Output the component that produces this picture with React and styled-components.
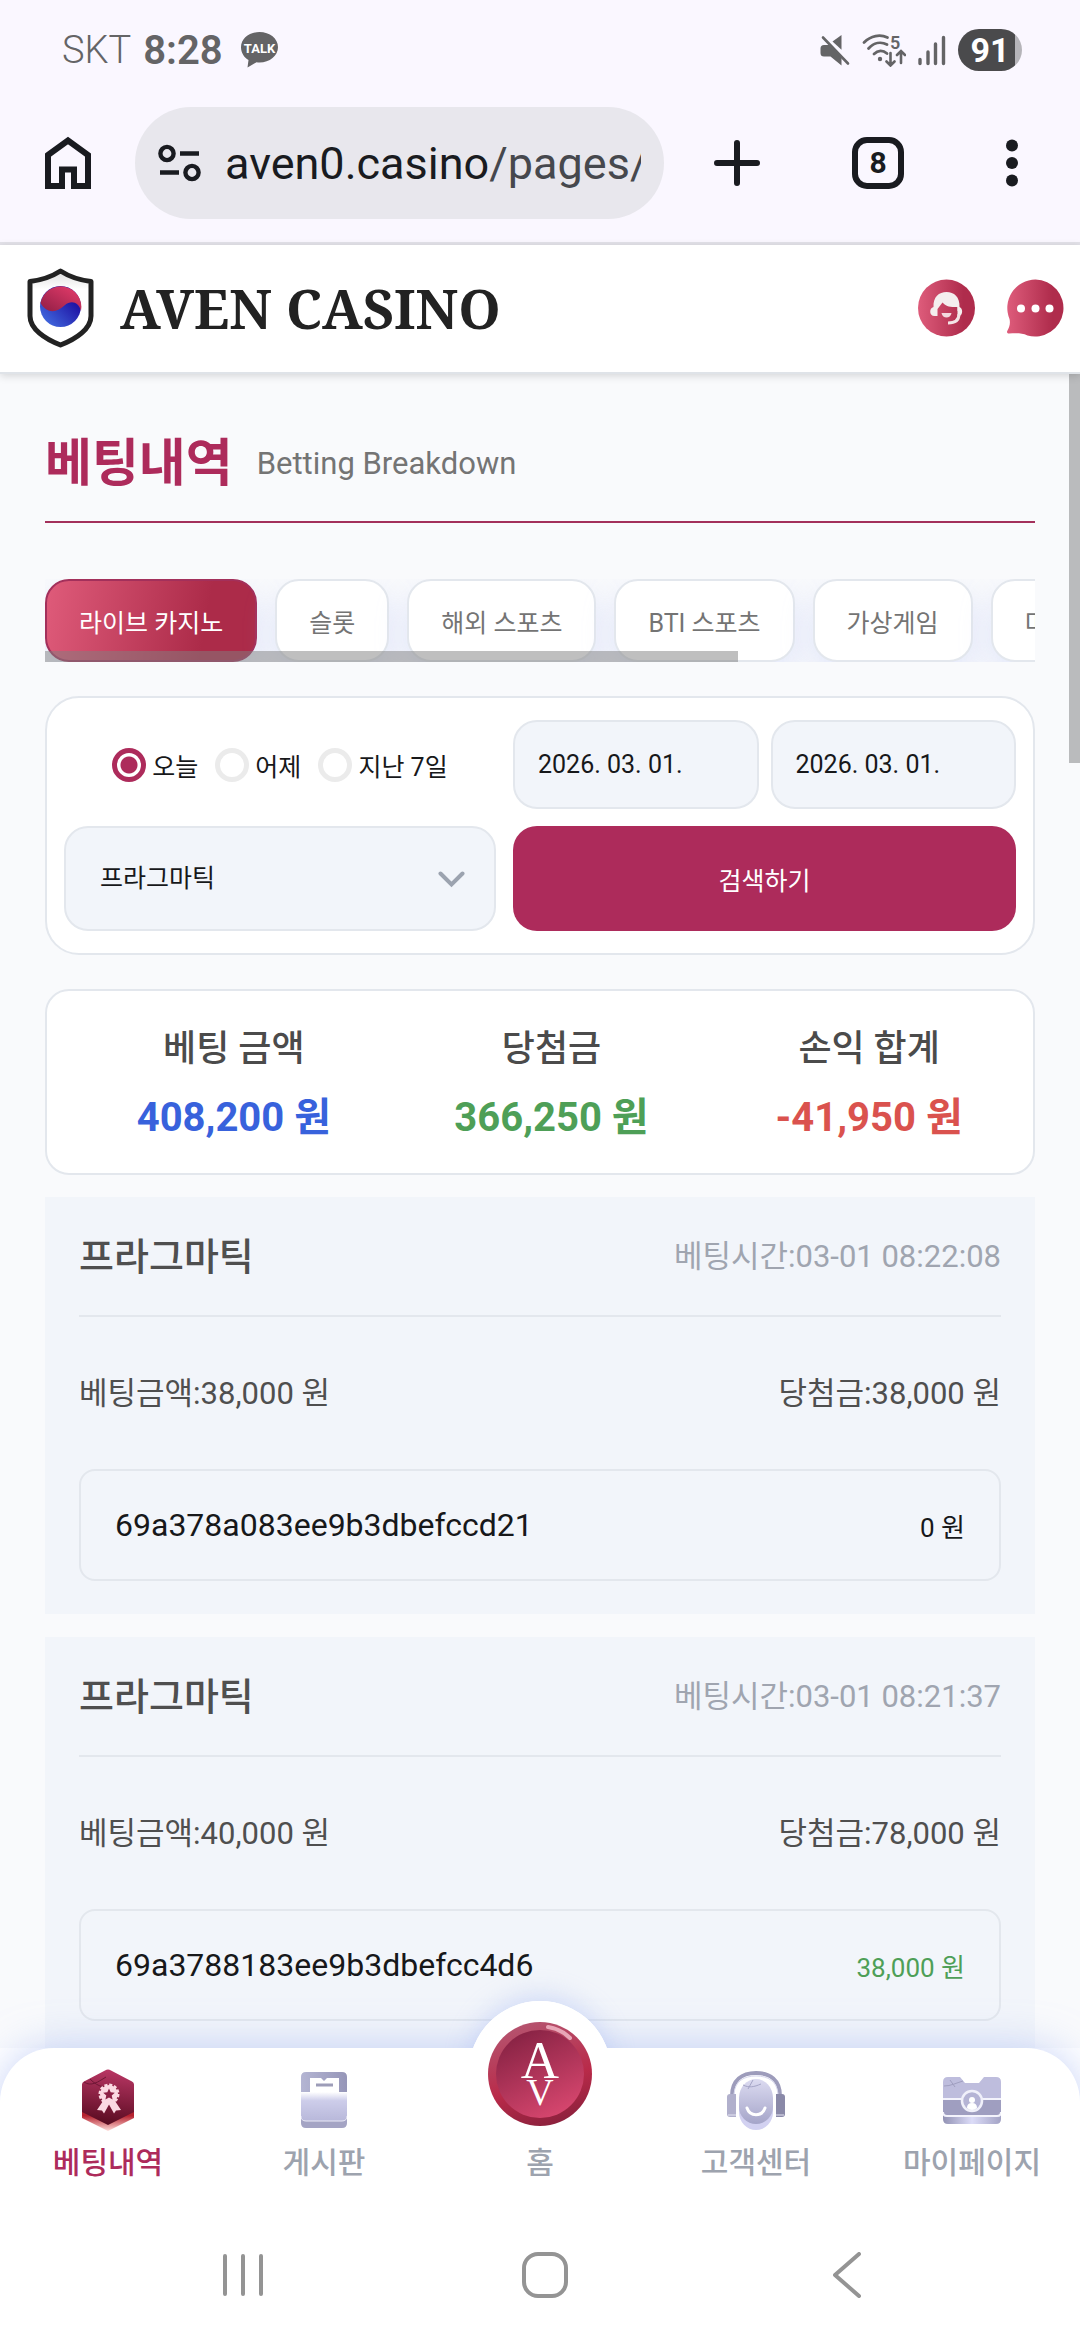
import { useState } from 'react'
import styled, { createGlobalStyle } from 'styled-components'

const GlobalStyle = createGlobalStyle`
    * {
        box-sizing: border-box;
    }

    body {
        margin: 0;
        background-color: #FFFFFF;
        color: #17181A;
        font-family: Roboto, "Noto Sans CJK KR", sans-serif;
        font-size: 25px;
    }

    button, input, select {
        font: inherit;
        color: inherit;
    }

    h1, h2, p, dl, dd {
        margin: 0;
    }

    svg {
        display: block;
        flex: none;
    }
`

const Screen = styled.div`
    height: 100vh;
    display: flex;
    flex-direction: column;
    overflow: hidden;
`

/* phone status bar and browser bar */

const StatusBar = styled.div`
    flex: none;
    height: 100px;
    padding: 0 58px 0 62px;
    display: flex;
    align-items: center;
    background-color: #FAF7FF;
    color: #646466;
    font-size: 38px;
`

const Carrier = styled.span`
    font-weight: 300;
`

const Clock = styled.span`
    margin: 0 18px 0 12px;
    font-size: 40px;
    font-weight: 600;
`

const StatusIcons = styled.div`
    margin-left: auto;
    display: flex;
    align-items: center;
    gap: 12px;
`

const Battery = styled.span`
    width: 64px;
    height: 42px;
    border-radius: 21px;
    background: linear-gradient(90deg, #4A4A4C 57px, #B5B4B9 57px);
    color: #FFFFFF;
    font-size: 34px;
    font-weight: 700;
    line-height: 43px;
    text-align: center;
`

const BrowserBar = styled.div`
    flex: none;
    height: 145px;
    padding: 7px 52px 23px 45px;
    border-bottom: 3px solid #E3E2E9;
    background-color: #FAF7FF;
    display: flex;
    align-items: center;
    color: #191B20;
`

const IconButton = styled.button`
    flex: none;
    padding: 0;
    border: none;
    background: none;
    cursor: pointer;
`

const AddressBar = styled.div`
    flex: 1;
    min-width: 0;
    height: 112px;
    margin: 0 50px 0 44px;
    padding: 0 23px;
    border-radius: 56px;
    background-color: #E8E7ED;
    display: flex;
    align-items: center;
    gap: 24px;
`

const Address = styled.span`
    flex: 1;
    min-width: 0;
    overflow: hidden;
    white-space: nowrap;
    font-size: 45px;
`

const AddressPath = styled.span`
    color: #46484D;
`

const BrowserActions = styled.div`
    flex: none;
    display: flex;
    align-items: center;
    gap: 92px;
`

const TabCount = styled.button`
    width: 52px;
    height: 52px;
    padding: 0;
    border: 6px solid #191B20;
    border-radius: 15px;
    background: none;
    font-size: 30px;
    font-weight: 700;
    line-height: 40px;
`

const MenuButton = styled(IconButton)`
    width: 32px;
    display: flex;
    justify-content: center;
`

/* site header */

const Header = styled.header`
    flex: none;
    position: relative;
    z-index: 1;
    height: 129px;
    padding: 0 16px 2px 27px;
    border-bottom: 2px solid #DFE3E8;
    box-shadow: 0 2px 8px #00000026;
    background-color: #FFFFFF;
    display: flex;
    align-items: center;
    justify-content: space-between;
`

const Brand = styled.a`
    display: flex;
    align-items: center;
    gap: 26px;
    color: #222222;
    font-family: "Noto Serif", "Liberation Serif", serif;
    font-size: 54px;
    font-weight: 700;
    text-decoration: none;
`

const HeaderActions = styled.div`
    display: flex;
    gap: 32px;
`

/* page */

const Main = styled.main`
    flex: 1;
    min-height: 0;
    position: relative;
    overflow: hidden;
    padding: 0 45px;
    background-color: #F9FAFC;
`

const PageScrollbar = styled.div`
    position: absolute;
    top: 0;
    right: 0;
    width: 11px;
    height: 389px;
    background-color: #BABBBD;
`

const TitleRow = styled.div`
    height: 149px;
    padding-top: 32px;
    border-bottom: 2px solid #A3305B;
    display: flex;
    align-items: center;
    gap: 24px;
`

const Title = styled.h1`
    color: #AD2B5B;
    font-size: 51px;
    font-weight: 700;
    line-height: 64px;
`

const Subtitle = styled.p`
    color: #747474;
    font-size: 31px;
`

const TabsFrame = styled.div`
    position: relative;
    margin-top: 56px;
`

const Tabs = styled.div`
    height: 83px;
    display: flex;
    gap: 18px;
    overflow: hidden;
`

const TabsScrollbar = styled.div`
    position: absolute;
    left: 0;
    bottom: 0;
    width: 70%;
    height: 11px;
    background-color: #80808080;
`

const Tab = styled.button`
    flex: none;
    padding: 0 32px;
    border: 2px solid ${props => props.$active ? '#A3305B' : '#E3E7ED'};
    border-radius: 24px;
    background: ${props => props.$active ? 'linear-gradient(100deg, #DF5B7A, #AC2B49 75%)' : '#FFFFFF'};
    box-shadow: 0 14px 30px #BCC8F660;
    color: ${props => props.$active ? '#FFFFFF' : '#747474'};
    white-space: nowrap;
    cursor: pointer;
`

const FilterCard = styled.form`
    margin-top: 34px;
    padding: 22px 17px;
    border: 2px solid #E3E7ED;
    border-radius: 34px;
    background-color: #FFFFFF;
    display: grid;
    grid-template-columns: 432fr 503fr;
    gap: 17px;
`

const Periods = styled.div`
    display: flex;
    align-items: center;
    justify-content: center;
    gap: 17px;
`

const Period = styled.label`
    display: flex;
    align-items: center;
    gap: 6px;
    white-space: nowrap;
`

const Radio = styled.input`
    appearance: none;
    width: 34px;
    height: 34px;
    margin: 0;
    border: 5px solid #EBEBEB;
    border-radius: 50%;

    &:checked {
        border-color: #AD2B5B;
        background: radial-gradient(circle, #AD2B5B 8px, #FFFFFF 9px);
    }
`

const Dates = styled.div`
    display: grid;
    grid-template-columns: 1fr 1fr;
    gap: 12px;
`

const DateInput = styled.input`
    min-width: 0;
    height: 89px;
    padding: 0 23px;
    border: 2px solid #E3E7ED;
    border-radius: 24px;
    background-color: #F2F5FA;
`

const SelectBox = styled.div`
    position: relative;
    display: grid;

    svg {
        position: absolute;
        right: 31px;
        top: 45px;
        pointer-events: none;
    }
`

const Select = styled.select`
    appearance: none;
    height: 105px;
    padding: 0 80px 0 34px;
    border: 2px solid #E3E7ED;
    border-radius: 24px;
    background-color: #F2F5FA;
`

const SearchButton = styled.button`
    height: 105px;
    border: none;
    border-radius: 24px;
    background-color: #AD2B5B;
    color: #FFFFFF;
    cursor: pointer;
`

const Summary = styled.dl`
    margin-top: 34px;
    padding: 32px 5px 24px 28px;
    border: 2px solid #E3E7ED;
    border-radius: 24px;
    background-color: #FFFFFF;
    display: grid;
    grid-template-columns: repeat(3, 1fr);
    text-align: center;
`

const SummaryLabel = styled.dt`
    color: #4B4B4B;
    font-size: 36px;
    font-weight: 500;
    line-height: 52px;
`

const SummaryValue = styled.dd`
    margin-top: 12px;
    color: ${props => props.$color};
    font-size: 40px;
    font-weight: 700;
    line-height: 62px;
`

const Record = styled.article`
    margin-top: ${props => props.$first ? '22px' : '23px'};
    padding: 0 34px 33px;
    background-color: #F2F5FA;
    color: #4F4F4F;
    font-size: 31px;
`

const RecordHead = styled.div`
    height: 120px;
    padding-bottom: 5px;
    border-bottom: 2px solid #E3E7ED;
    display: flex;
    align-items: center;
    justify-content: space-between;
`

const RecordName = styled.h2`
    font-size: 38px;
    font-weight: 500;
`

const RecordTime = styled.time`
    color: #A0A5B0;
`

const RecordAmounts = styled.div`
    height: 152px;
    padding-bottom: 5px;
    display: flex;
    align-items: center;
    justify-content: space-between;
`

const RecordBox = styled.div`
    height: 112px;
    padding: 0 34px;
    border: 2px solid #E3E7ED;
    border-radius: 16px;
    display: flex;
    align-items: center;
    justify-content: space-between;
    color: #17181A;
`

const RecordId = styled.span`
    font-size: 32px;
`

const Profit = styled.span`
    color: ${props => props.$win ? '#4E9F57' : '#17181A'};
    font-size: 26px;
`

/* bottom navigation */

const BottomNav = styled.nav`
    flex: none;
    position: relative;
    z-index: 1;
    height: 162px;
    border-radius: 54px 54px 0 0;
    background-color: #FFFFFF;
    box-shadow: 0 0 42px #A9BBF3AA;
    display: grid;
    grid-template-columns: repeat(5, 1fr);
`

const NavItem = styled.a`
    position: relative;
    padding-top: 20px;
    display: flex;
    flex-direction: column;
    align-items: center;
    gap: 9px;
    color: ${props => props.$active ? '#AD2B5B' : '#9DA3AE'};
    font-size: 30px;
    font-weight: 500;
    line-height: 44px;
    text-decoration: none;
`

const NavIcon = styled.span`
    height: 64px;
    display: flex;
    align-items: center;
`

/* round button that rises over the top edge of the bar */
const HomeCoin = styled.span`
    position: absolute;
    top: -47px;
    width: 142px;
    height: 142px;
    padding-top: 4px;
    border-radius: 50%;
    background-color: #FFFFFF;
    display: flex;
    align-items: center;
    justify-content: center;
`

/* only the part above the bar gets a glow */
const HomeGlow = styled(HomeCoin)`
    box-shadow: 0 -6px 24px #A9BBF370;
    clip-path: inset(-40px -40px 95px -40px);
`

const NavLabel = styled.span`
    position: relative;
`

const SystemNav = styled.div`
    flex: none;
    position: relative;
    z-index: 2;
    height: 130px;
    padding: 0 82px 0 92px;
    background-color: #FFFFFF;
    display: grid;
    grid-template-columns: repeat(3, 1fr);
    place-items: center;
`

const TalkIcon = () => (
    <svg width="37" height="36" viewBox="0 0 37 36">
        <path d="M18.500 0C8.300 0 0 6.600 0 15.200c0 5.600 3.200 10.300 7.500 12.800L6.500 35.500l9-5.300c1 .2 2 .2 3 .2C28.700 30.400 37 23.800 37 15.200S28.700 0 18.500 0Z" fill="#646466" />
        <text x="18.500" y="21" textAnchor="middle" fontSize="13" fontWeight="700" fill="#FFFFFF">TALK</text>
    </svg>
)

const MuteIcon = () => (
    <svg width="30" height="31" viewBox="0 0 30 31" fill="#646466">
        <path d="M4 10h5l12.500 12.500V30.500L10.500 21.500H4Q.5 21.500.5 18v-4.500Q.5 10 4 10Z" />
        <path d="M12.500 6.500 21.500 0V14.800Z" />
        <path d="M3 2.500 28 28.500" stroke="#646466" strokeWidth="2.600" strokeLinecap="round" />
    </svg>
)

const WifiIcon = () => (
    <svg width="44" height="34" viewBox="0 0 44 34" fill="none" stroke="#646466" strokeWidth="2.800" strokeLinecap="round">
        <path d="M2 9.500C9 2.500 18 1 25.500 4.500M6.500 15.500C12 9.500 19 8.500 25 11.500M12 21c4-4 9-4 13-.5" />
        <circle cx="18" cy="26" r="2.200" fill="#646466" stroke="none" />
        <path d="M28.500 20v12M24.500 28.500l4 4 4-4M39 30V18.500M35 22l4-4 4 4" strokeWidth="2.600" />
        <text x="28" y="16" fontSize="18" fontWeight="600" fill="#646466" stroke="none">5</text>
    </svg>
)

const SignalIcon = () => (
    <svg width="28" height="31" viewBox="0 0 28 31" stroke="#646466" strokeWidth="3.400" strokeLinecap="round">
        <path d="M2 24.500v4M10 17v11.500M17.500 9v19.500M25.500 2.500v26" />
    </svg>
)

const HomeIcon = () => (
    <svg width="46" height="54" viewBox="0 0 46 54" fill="none" stroke="#191B20" strokeWidth="6">
        <path d="M3 19 23 4.500 43 19v31H29V33.500H17V50H3Z" />
    </svg>
)

const TuneIcon = () => (
    <svg width="43" height="38" viewBox="0 0 43 38" fill="none" stroke="#191B20" strokeWidth="4.400">
        <circle cx="9" cy="9.500" r="6.600" />
        <circle cx="34" cy="28.500" r="6.600" />
        <path d="M22 9.500h19M2 28.500h19" />
    </svg>
)

const PlusIcon = () => (
    <svg width="46" height="48" viewBox="0 0 46 48" stroke="#191B20" strokeWidth="6" strokeLinecap="round">
        <path d="M23 4v40M3 24h40" />
    </svg>
)

const DotsIcon = () => (
    <svg width="12" height="48" viewBox="0 0 12 48" fill="#191B20">
        <circle cx="6" cy="6.500" r="6" />
        <circle cx="6" cy="24" r="6" />
        <circle cx="6" cy="41.500" r="6" />
    </svg>
)

const ShieldLogo = () => (
    <svg width="67" height="80" viewBox="0 0 67 80">
        <defs>
            <linearGradient id="taegukRed" x1="1" y1="0" x2="0" y2="1">
                <stop offset="0" stopColor="#E93D6C" />
                <stop offset="1" stopColor="#901E45" />
            </linearGradient>
            <linearGradient id="taegukBlue" x1="1" y1="0" x2="0" y2="1">
                <stop offset="0.3" stopColor="#2016A6" />
                <stop offset="1" stopColor="#4677E8" />
            </linearGradient>
            <linearGradient id="shieldFill" x1="0" y1="0" x2="0" y2="1">
                <stop offset="0" stopColor="#DEDEDE" />
                <stop offset=".25" stopColor="#FFFFFF" />
            </linearGradient>
        </defs>
        <path d="M33.500 3C25 8.500 15 12 3 13.500V48c0 13 15 23 30.500 29C49 71 64 61 64 48V13.500C52 12 42 8.500 33.500 3Z" fill="url(#shieldFill)" stroke="#222222" strokeWidth="5" strokeLinejoin="round" />
        <circle cx="33.500" cy="38.500" r="20.500" fill="url(#taegukBlue)" />
        <path d="M13.500 35A20.500 20.500 0 0 1 54 43C52 34 44 32 38 37 30 45 20 46 13.500 35Z" fill="url(#taegukRed)" />
    </svg>
)

const SupportIcon = () => (
    <svg width="57" height="58" viewBox="0 0 57 58">
        <defs>
            <linearGradient id="rose" x1="0" y1="0" x2="1" y2="0">
                <stop offset="0" stopColor="#DE5C7B" />
                <stop offset=".8" stopColor="#AF2C4C" />
            </linearGradient>
        </defs>
        <circle cx="28.500" cy="29" r="28.500" fill="url(#rose)" />
        {/* hair and ear pads */}
        <path d="M15.500 28C15 18 21 13 28.500 13S42 18 41.500 28v4h-2v-4c-8 .5-12-1-15-4.500L19.500 30v7h-3c-5.500 0-5.500-8-1-9Z" fill="#F4EEEE" />
        <path d="M39.500 28h2c3.500 1 3.500 8 0 9h-2Z" fill="#F4EEEE" />
        <path d="M23.500 34h10c-1 6-9 6-10 0Z" fill="#F3D9DE" />
        <path d="M41 35c0 6-4 9-11 9" fill="none" stroke="#F3E4E6" strokeWidth="3" />
    </svg>
)

const ChatIcon = () => (
    <svg width="57" height="58" viewBox="0 0 57 58">
        <path d="M28.500 .5a28.500 28.500 0 1 1-8 56C14 53.500 8 54.500 2 54.500c-2 0-2.500-1.500-1.500-3C2.500 48 3.500 44 2.500 40A28.500 28.500 0 0 1 28.500 .5Z" fill="url(#rose)" />
        <g fill="#FFFFFF">
            <circle cx="14" cy="29.500" r="4" />
            <circle cx="28.500" cy="29.500" r="4" />
            <circle cx="42.500" cy="29.500" r="4" />
        </g>
    </svg>
)

const ChevronIcon = () => (
    <svg width="27" height="17" viewBox="0 0 27 17" fill="none" stroke="#9CA3AF" strokeWidth="4" strokeLinecap="round">
        <path d="m2.500 2.500 11 11 11-11" />
    </svg>
)

const MedalIcon = () => (
    <svg width="52" height="62" viewBox="0 0 52 62">
        <defs>
            <linearGradient id="hexFace" x1=".6" y1="0" x2=".5" y2="1">
                <stop offset="0" stopColor="#B93664" />
                <stop offset="1" stopColor="#580B20" />
            </linearGradient>
            <linearGradient id="hexEdge" x1="0" y1="0" x2="0" y2="1">
                <stop offset=".3" stopColor="#B5222F" />
                <stop offset="1" stopColor="#FFDDDA" />
            </linearGradient>
        </defs>
        <path d="M0 40h52v9L26 62 0 49Z" fill="url(#hexEdge)" />
        <path d="M23 1.500q3-2 6 0L50 12.500q2 1 2 3V43L26 56 0 43V15.500q0-2 2-3Z" fill="url(#hexFace)" />
        <path d="M2 13c7 5 14 0 22-5M8 10c4 4 8 7 14 8" fill="none" stroke="#6E1735" />
        <path d="m21 32-6 9 5 .5 2 3 5-9 5 9 2-3 5-.5-6-9Z" fill="#FBD9E2" />
        <circle cx="27" cy="25" r="9" fill="#FBD9E2" />
        <circle cx="27" cy="25" r="9" fill="none" stroke="#FBD9E2" strokeDasharray="3 1.700" strokeWidth="3" />
        <path d="m27 19.500 1.700 3.800 4.100.4-3.100 2.700.9 4.100L27 28.400l-3.600 2.100.9-4.100-3.100-2.700 4.100-.4Z" fill="#8C2145" />
    </svg>
)

const BoardIcon = () => (
    <svg width="46" height="56" viewBox="0 0 46 56">
        <defs>
            <linearGradient id="lilac" x1="0" y1="0" x2="0" y2="1">
                <stop offset="0" stopColor="#DCDBF1" />
                <stop offset="1" stopColor="#A5A5C9" />
            </linearGradient>
            <linearGradient id="boardTop" x1="0" y1="0" x2="1" y2="0">
                <stop offset="0" stopColor="#B4B5D3" />
                <stop offset="1" stopColor="#9696B8" />
            </linearGradient>
            <linearGradient id="boardFront" x1="0" y1="0" x2="0" y2="1">
                <stop offset="0" stopColor="#FFFFFF" />
                <stop offset=".3" stopColor="#CDCDEA" />
                <stop offset="1" stopColor="#B8B8DA" />
            </linearGradient>
        </defs>
        <path d="M0 5q0-5 5-5h36q5 0 5 5v18H0Z" fill="url(#boardTop)" />
        <path d="M9 6h11l3 3 3-3h12v17H9Z" fill="#FFFFFF" />
        <path d="M15 13h17" stroke="#9D9DB8" strokeWidth="3" />
        <path d="M0 45h46v6q0 5-5 5H5q-5 0-5-5Z" fill="#A4A4C4" />
        <path d="M0 20h46v24q0 5-5 5H5q-5 0-5-5Z" fill="url(#boardFront)" />
        <path d="M0 44q0 5 5 5h36q5 0 5-5" fill="none" stroke="#E9E9F6" />
    </svg>
)

const HeadsetIcon = () => (
    <svg width="58" height="60" viewBox="0 0 58 60">
        <path d="M12 33a17 20 0 0 1 34 0v9a17 18 0 0 1-34 0Z" fill="#D2D1F1" />
        <path d="M12 28a17 19 0 0 1 34 0v9a17 17 0 0 1-34 0Z" fill="url(#lilac)" />
        <path d="M16 15c6 3 11 2 18-1M26 10l-5 9" fill="none" stroke="#A4A4C6" />
        <path d="M5 26C5 10 15 3 29 3s24 7 24 23" fill="none" stroke="#9D9CBB" strokeWidth="4" />
        <path d="M7 24C8 11 17 6 29 6s21 5 22 18" fill="none" stroke="#D8D8EE" strokeWidth="1" />
        <path d="M0 27q0-3 3-3h6v23H3q-3 0-3-3Z" fill="#B1B0CC" />
        <path d="M49 24h6q3 0 3 3v17q0 3-3 3h-6Z" fill="#8A89A8" />
        <path d="M1 45h8M49 45h8" stroke="#E5E5F3" />
        <path d="M20 38c3 9 15 9 18 0" fill="none" stroke="#FFFFFF" strokeWidth="3" strokeLinecap="round" />
    </svg>
)

const WalletIcon = () => (
    <svg width="58" height="47" viewBox="0 0 58 47">
        <defs>
            <linearGradient id="walletEdge" x1="0" y1="0" x2="1" y2="0">
                <stop offset="0" stopColor="#9292B4" />
                <stop offset=".5" stopColor="#DCDCF8" />
                <stop offset="1" stopColor="#A3A3C5" />
            </linearGradient>
        </defs>
        <path d="M0 34h58v8q0 5-5 5H5q-5 0-5-5Z" fill="url(#walletEdge)" />
        <path d="M0 5q0-5 5-5h12l5 6h14l5-6h12q5 0 5 5v16H0Z" fill="#BEBDDD" />
        <path d="M0 23h58v12q0 4-4 4H4q-4 0-4-4Z" fill="#9F9EC0" />
        <path d="M0 35q0 4 4 4h50q4 0 4-4M0 22h58" fill="none" stroke="#F3F3FC" strokeWidth="2" />
        <path d="M1 9c7 0 12-3 19-5M7 3l5 7" fill="none" stroke="#A09FC0" />
        <circle cx="29" cy="24" r="10" fill="#B5B4D5" stroke="#F0F0FA" strokeWidth="2.500" />
        <circle cx="29" cy="23" r="3" fill="#FFFFFF" />
        <path d="M24 31q0-5 5-5t5 5q-2 2-5 2t-5-2Z" fill="#FFFFFF" />
    </svg>
)

const CoinIcon = () => (
    <svg width="104" height="106" viewBox="0 0 104 106">
        <defs>
            <linearGradient id="coinRim" x1=".3" y1="0" x2=".6" y2="1">
                <stop offset="0" stopColor="#B55570" />
                <stop offset=".6" stopColor="#B92A49" />
                <stop offset="1" stopColor="#8C213D" />
            </linearGradient>
            <linearGradient id="coinFace" x1=".2" y1="0" x2=".7" y2="1">
                <stop offset="0" stopColor="#842142" />
                <stop offset="1" stopColor="#D8476F" />
            </linearGradient>
        </defs>
        <circle cx="52" cy="53" r="52" fill="url(#coinRim)" />
        <circle cx="52" cy="53" r="44" fill="url(#coinFace)" />
        <path d="M60 6q13 2 22 11" fill="none" stroke="#E8A6B7" strokeWidth="4" strokeLinecap="round" />
        <g fill="#FFFFFF" fontFamily="Liberation Serif, serif" textAnchor="middle">
            <text x="52" y="57" fontSize="53">A</text>
            <text x="52" y="84" fontSize="38">V</text>
        </g>
    </svg>
)

const RecentsIcon = () => (
    <svg width="42" height="44" viewBox="0 0 42 44" stroke="#949494" strokeWidth="4" strokeLinecap="round">
        <path d="M3 3v38M21 3v38M39 3v38" />
    </svg>
)

const SystemHomeIcon = () => (
    <svg width="46" height="46" viewBox="0 0 46 46" fill="none" stroke="#949494" strokeWidth="4">
        <rect x="2" y="2" width="42" height="42" rx="14" />
    </svg>
)

const BackIcon = () => (
    <svg width="28" height="46" viewBox="0 0 28 46" fill="none" stroke="#949494" strokeWidth="4" strokeLinecap="round" strokeLinejoin="round">
        <path d="M26 2 2 23l24 21" />
    </svg>
)

const tabs = ['라이브 카지노', '슬롯', '해외 스포츠', 'BTI 스포츠', '가상게임', '미니게임']

const periods = ['오늘', '어제', '지난 7일']

const totals = [
    { label: '베팅 금액', value: '408,200 원', color: '#3862DC' },
    { label: '당첨금', value: '366,250 원', color: '#4E9F57' },
    { label: '손익 합계', value: '-41,950 원', color: '#DA524E' },
]

const records = [
    { id: '69a378a083ee9b3dbefccd21', time: '03-01 08:22:08', bet: '38,000', payout: '38,000', profit: '0', win: false },
    { id: '69a3788183ee9b3dbefcc4d6', time: '03-01 08:21:37', bet: '40,000', payout: '78,000', profit: '38,000', win: true },
]

export default function App() {
    const [tab, setTab] = useState(tabs[0])
    const [period, setPeriod] = useState(periods[0])

    return (
        <Screen>
            <GlobalStyle />
            <StatusBar>
                <Carrier>SKT</Carrier>
                <Clock>8:28</Clock>
                <TalkIcon />
                <StatusIcons>
                    <MuteIcon />
                    <WifiIcon />
                    <SignalIcon />
                    <Battery>91</Battery>
                </StatusIcons>
            </StatusBar>
            <BrowserBar>
                <IconButton aria-label="홈페이지"><HomeIcon /></IconButton>
                <AddressBar>
                    <TuneIcon />
                    <Address>aven0.casino<AddressPath>/pages/</AddressPath></Address>
                </AddressBar>
                <BrowserActions>
                    <IconButton aria-label="새 탭"><PlusIcon /></IconButton>
                    <TabCount>8</TabCount>
                    <MenuButton aria-label="메뉴"><DotsIcon /></MenuButton>
                </BrowserActions>
            </BrowserBar>
            <Header>
                <Brand href="#">
                    <ShieldLogo />
                    AVEN CASINO
                </Brand>
                <HeaderActions>
                    <IconButton aria-label="상담원"><SupportIcon /></IconButton>
                    <IconButton aria-label="채팅"><ChatIcon /></IconButton>
                </HeaderActions>
            </Header>
            <Main>
                <TitleRow>
                    <Title>베팅내역</Title>
                    <Subtitle>Betting Breakdown</Subtitle>
                </TitleRow>
                <TabsFrame>
                    <Tabs>
                        {tabs.map(name => (
                            <Tab key={name} $active={name === tab} onClick={() => setTab(name)}>
                                {name}
                            </Tab>
                        ))}
                    </Tabs>
                    <TabsScrollbar />
                </TabsFrame>
                <FilterCard onSubmit={e => e.preventDefault()}>
                    <Periods>
                        {periods.map(name => (
                            <Period key={name}>
                                <Radio
                                    type="radio"
                                    name="period"
                                    checked={name === period}
                                    onChange={() => setPeriod(name)}
                                />
                                {name}
                            </Period>
                        ))}
                    </Periods>
                    <Dates>
                        <DateInput aria-label="시작일" defaultValue="2026. 03. 01." />
                        <DateInput aria-label="종료일" defaultValue="2026. 03. 01." />
                    </Dates>
                    <SelectBox>
                        <Select aria-label="게임사">
                            <option>프라그마틱</option>
                        </Select>
                        <ChevronIcon />
                    </SelectBox>
                    <SearchButton>검색하기</SearchButton>
                </FilterCard>
                <Summary>
                    {totals.map(total => (
                        <div key={total.label}>
                            <SummaryLabel>{total.label}</SummaryLabel>
                            <SummaryValue $color={total.color}>{total.value}</SummaryValue>
                        </div>
                    ))}
                </Summary>
                {records.map((record, index) => (
                    <Record key={record.id} $first={index === 0}>
                        <RecordHead>
                            <RecordName>프라그마틱</RecordName>
                            <RecordTime>베팅시간:{record.time}</RecordTime>
                        </RecordHead>
                        <RecordAmounts>
                            <span>베팅금액:{record.bet} 원</span>
                            <span>당첨금:{record.payout} 원</span>
                        </RecordAmounts>
                        <RecordBox>
                            <RecordId>{record.id}</RecordId>
                            <Profit $win={record.win}>{record.profit} 원</Profit>
                        </RecordBox>
                    </Record>
                ))}
                <PageScrollbar />
            </Main>
            <BottomNav>
                <NavItem href="#" $active>
                    <NavIcon><MedalIcon /></NavIcon>
                    <NavLabel>베팅내역</NavLabel>
                </NavItem>
                <NavItem href="#">
                    <NavIcon><BoardIcon /></NavIcon>
                    <NavLabel>게시판</NavLabel>
                </NavItem>
                <NavItem href="#">
                    <HomeGlow />
                    <HomeCoin><CoinIcon /></HomeCoin>
                    <NavIcon />
                    <NavLabel>홈</NavLabel>
                </NavItem>
                <NavItem href="#">
                    <NavIcon><HeadsetIcon /></NavIcon>
                    <NavLabel>고객센터</NavLabel>
                </NavItem>
                <NavItem href="#">
                    <NavIcon><WalletIcon /></NavIcon>
                    <NavLabel>마이페이지</NavLabel>
                </NavItem>
            </BottomNav>
            <SystemNav>
                <IconButton aria-label="최근 앱"><RecentsIcon /></IconButton>
                <IconButton aria-label="홈 화면"><SystemHomeIcon /></IconButton>
                <IconButton aria-label="뒤로"><BackIcon /></IconButton>
            </SystemNav>
        </Screen>
    )
}
